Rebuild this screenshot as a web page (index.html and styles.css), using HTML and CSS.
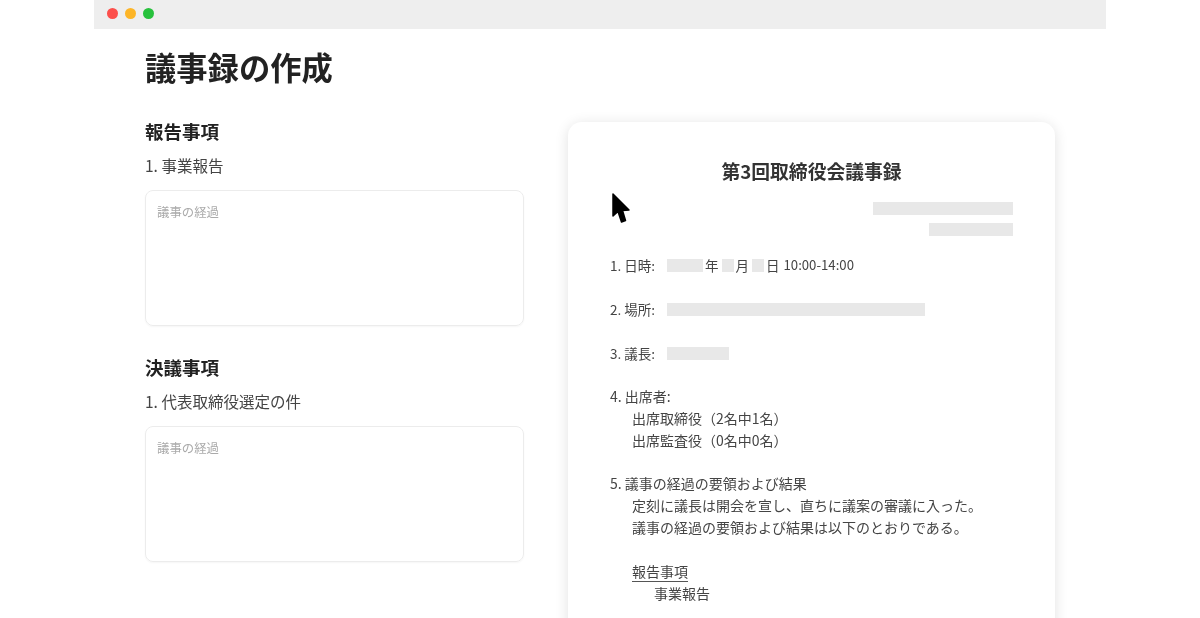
FILE: index.html
```html
<!DOCTYPE html>
<html lang="ja">
<head>
  <meta charset="UTF-8" />
  <title>議事録の作成</title>
  <link rel="stylesheet" href="styles.css">
</head>
<body>
  <div class="window">
    <div class="titlebar">
      <span class="dot dot-red"></span>
      <span class="dot dot-yellow"></span>
      <span class="dot dot-green"></span>
    </div>
    <div class="content">
      <h1>議事録の作成</h1>
      <div class="columns">
        <div class="form">
          <section class="form-section">
            <h2>報告事項</h2>
            <p class="item">1. 事業報告</p>
            <div class="textbox">議事の経過</div>
          </section>
          <section class="form-section">
            <h2>決議事項</h2>
            <p class="item">1. 代表取締役選定の件</p>
            <div class="textbox">議事の経過</div>
          </section>
        </div>
        <div class="doc">
          <h3>第3回取締役会議事録</h3>
          <div class="doc-meta">
            <span class="bar bar-meta-long"></span>
            <span class="bar bar-meta-short"></span>
          </div>
          <div class="doc-row date-row">
            <span class="label">1. 日時:</span>
            <span class="bar bar-year"></span><span>年</span>
            <span class="bar bar-day"></span><span>月</span>
            <span class="bar bar-day"></span><span>日</span>
            <span class="time">10:00-14:00</span>
          </div>
          <div class="doc-row">
            <span class="label">2. 場所:</span>
            <span class="bar bar-place"></span>
          </div>
          <div class="doc-row">
            <span class="label">3. 議長:</span>
            <span class="bar bar-chair"></span>
          </div>
          <div class="doc-block">
            <p>4. 出席者:</p>
            <p class="indent">出席取締役（2名中1名）</p>
            <p class="indent">出席監査役（0名中0名）</p>
          </div>
          <div class="doc-block">
            <p>5. 議事の経過の要領および結果</p>
            <p class="indent">定刻に議長は開会を宣し、直ちに議案の審議に入った。</p>
            <p class="indent">議事の経過の要領および結果は以下のとおりである。</p>
          </div>
          <div class="doc-block">
            <p class="indent"><span class="underlined">報告事項</span></p>
            <p class="indent-2">事業報告</p>
          </div>
          <svg class="cursor" width="18" height="31" viewBox="0 0 18 31">
            <path d="M1 1 L1 23 L6 18.5 L9.5 29 L13.5 27.5 L10.5 17.5 L17 17 Z" fill="#000" stroke="#000" stroke-width="1.5" stroke-linejoin="round"/>
          </svg>
        </div>
      </div>
    </div>
  </div>
</body>
</html>
```

FILE: styles.css
```css
* {
  box-sizing: border-box;
}
html, body {
  margin: 0;
  padding: 0;
  height: 618px;
  overflow: hidden;
  background: #fff;
}
body {
  font-family: "Noto Sans CJK JP", "Noto Sans", sans-serif;
  color: #333;
}
.window {
  margin: 0 94px;
  height: 618px;
  overflow: hidden;
  filter: blur(0.6px);
}
.titlebar {
  height: 29px;
  background: #eeeeee;
  display: flex;
  align-items: center;
  gap: 7px;
  padding: 0 0 3px 12.5px;
}
.dot {
  width: 11px;
  height: 11px;
  border-radius: 50%;
}
.dot-red { background: #fc4f4b; }
.dot-yellow { background: #fdb527; }
.dot-green { background: #27c13c; }
.content {
  padding: 0 51px;
}
h1 {
  margin: 0;
  padding-top: 15px;
  height: 93px;
  font-size: 31.3px;
  line-height: 46px;
  font-weight: 700;
  color: #222;
}
.columns {
  display: flex;
  gap: 44px;
  align-items: flex-start;
}
.form {
  width: 379px;
  flex: none;
  margin-top: -1px;
}
.form-section {
  margin-bottom: 31px;
}
h2 {
  margin: 0;
  font-size: 18.5px;
  line-height: 20px;
  font-weight: 700;
  color: #222;
}
.item {
  margin: 14px 0 0;
  font-size: 15.5px;
  line-height: 20px;
  color: #444;
}
.textbox {
  margin-top: 15px;
  height: 136px;
  padding: 12px 11px;
  border: 1px solid #ececec;
  border-radius: 8px;
  box-shadow: 0 1px 2px rgba(0, 0, 0, 0.04);
  font-size: 12.4px;
  line-height: 18px;
  color: #aaa;
}
.doc {
  position: relative;
  width: 487px;
  flex: none;
  height: 560px;
  padding: 37px 42px 0;
  background: #fff;
  border-radius: 14px;
  box-shadow: 0 2px 14px rgba(0, 0, 0, 0.12);
  font-size: 14px;
  line-height: 22px;
  color: #444;
}
h3 {
  margin: 0;
  text-align: center;
  font-size: 18.8px;
  line-height: 24px;
  font-weight: 700;
  color: #333;
}
.bar {
  display: block;
  height: 13px;
  background: #e8e8e8;
}
.doc-meta {
  margin-top: 19px;
  display: flex;
  flex-direction: column;
  align-items: flex-end;
  gap: 8px;
}
.bar-meta-long { width: 140px; }
.bar-meta-short { width: 84px; }
.doc-row {
  display: flex;
  align-items: center;
  height: 22px;
  margin-bottom: 22px;
  font-size: 13.5px;
}
.doc-meta + .doc-row {
  margin-top: 18px;
}
.label {
  width: 57px;
  flex: none;
}
.date-row {
  gap: 2px;
}
.date-row .label {
  margin-right: -2px;
}
.bar-year { width: 36px; }
.bar-day { width: 12px; margin-left: 1px; }
.time {
  margin-left: 2px;
  font-size: 13.2px;
}
.bar-place { width: 258px; }
.bar-chair { width: 62px; }
.doc-block {
  margin-bottom: 22px;
  line-height: 21.8px;
}
.doc-block p {
  margin: 0;
}
.doc-block .indent {
  padding-left: 22px;
}
.doc-block .indent-2 {
  padding-left: 44px;
}
.underlined {
  display: inline-block;
  border-bottom: 1px solid #555;
  line-height: 20px;
}
.cursor {
  position: absolute;
  left: 44px;
  top: 71px;
}
```
